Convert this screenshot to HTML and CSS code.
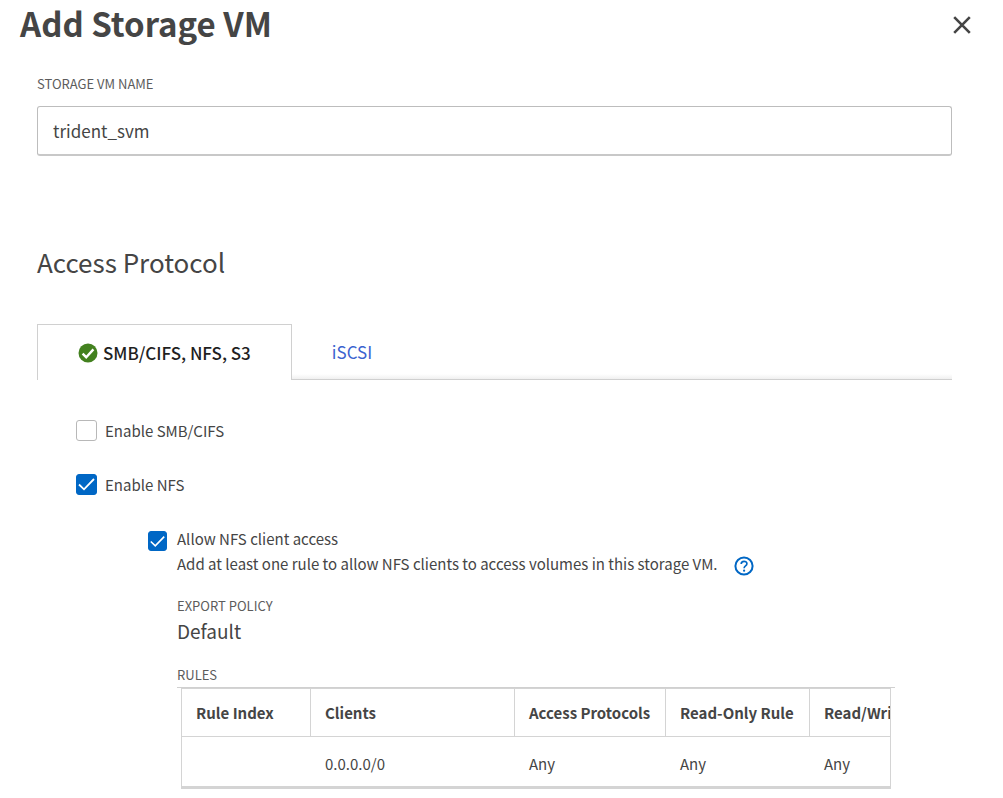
FILE: index.html
```html
<!DOCTYPE html>
<html lang="en">
<head>
    <meta charset="utf-8">
    <meta name="viewport" content="width=device-width, initial-scale=1">
    <title>Add Storage VM</title>
    <link rel="stylesheet" href="styles.css">
</head>
<body>
    <form class="dialog">
        <header class="dialog-header">
            <h1>Add Storage VM</h1>
            <button type="button" class="close" aria-label="Close">
                <svg width="20" height="20" viewBox="0 0 20 20"><path d="M2.2 2.2l15.6 15.6M17.8 2.2L2.2 17.8"/></svg>
            </button>
        </header>

        <div class="dialog-body">
            <label class="caption" for="svm_name">STORAGE VM NAME</label>
            <input type="text" class="text-input" id="svm_name" name="svm_name" value="trident_svm">

            <h2>Access Protocol</h2>

            <div class="tabs" role="tablist">
                <button type="button" class="tab active" role="tab" aria-selected="true">
                    <svg width="20" height="20" viewBox="0 0 20 20">
                        <circle cx="10" cy="10" r="9.5" fill="#43811f"/>
                        <path d="M4.6 10.6l3.6 3.6L15.4 6.4" fill="none" stroke="#fff" stroke-width="2.4"/>
                    </svg>
                    <span>SMB/CIFS, NFS, S3</span>
                </button>
                <button type="button" class="tab" role="tab" aria-selected="false">iSCSI</button>
            </div>

            <div class="panel">
                <div class="check-row">
                    <input type="checkbox" id="enable_smb">
                    <label for="enable_smb">Enable SMB/CIFS</label>
                </div>
                <div class="check-row">
                    <input type="checkbox" id="enable_nfs" checked>
                    <label for="enable_nfs">Enable NFS</label>
                </div>

                <div class="nfs">
                    <input type="checkbox" class="small" id="nfs_client" checked>
                    <div class="nfs-content">
                        <label for="nfs_client">Allow NFS client access</label>
                        <div class="hint">
                            <span>Add at least one rule to allow NFS clients to access volumes in this storage VM.</span>
                            <button type="button" class="help" aria-label="Help">
                                <svg width="20" height="20" viewBox="0 0 20 20" fill="none" stroke="#0067c5">
                                    <circle cx="10" cy="10" r="8.6" stroke-width="2"/>
                                    <path d="M7.2 8.1c0-3.7 5.7-3.6 5.7-.3 0 2.1-2.8 2.2-2.8 4.4" stroke-width="1.7"/>
                                    <circle cx="10.1" cy="14.7" r="1.1" fill="#0067c5" stroke="none"/>
                                </svg>
                            </button>
                        </div>

                        <div class="caption">EXPORT POLICY</div>
                        <div class="policy">Default</div>

                        <div class="caption">RULES</div>
                        <div class="rules">
                            <div class="rules-scroll">
                                <table>
                                    <colgroup>
                                        <col class="col-index">
                                        <col class="col-clients">
                                        <col class="col-access">
                                        <col class="col-rule">
                                        <col class="col-rule">
                                    </colgroup>
                                    <thead>
                                        <tr>
                                            <th>Rule Index</th>
                                            <th>Clients</th>
                                            <th>Access Protocols</th>
                                            <th>Read-Only Rule</th>
                                            <th>Read/Wri</th>
                                        </tr>
                                    </thead>
                                    <tbody>
                                        <tr>
                                            <td></td>
                                            <td>0.0.0.0/0</td>
                                            <td>Any</td>
                                            <td>Any</td>
                                            <td>Any</td>
                                        </tr>
                                    </tbody>
                                </table>
                            </div>
                        </div>
                    </div>
                </div>
            </div>
        </div>
    </form>
</body>
</html>
```

FILE: styles.css
```css
* {
  box-sizing: border-box;
}
body {
  margin: 0;
  background: #fff;
  color: #454545;
  font-family: "Noto Sans CJK SC", "Open Sans", sans-serif;
  font-size: 15px;
  line-height: 24px;
}
button, input {
  margin: 0;
  font: inherit;
  color: inherit;
}
button {
  padding: 0;
  border: 0;
  background: none;
  cursor: pointer;
}
svg {
  display: block;
}
h1, h2 {
  margin: 0;
}

.dialog-header {
  display: flex;
  justify-content: space-between;
  align-items: flex-start;
  height: 48px;
  padding: 0 31px 0 20px;
}
h1 {
  font-size: 33px;
  line-height: 46px;
  font-weight: 700;
}
.close {
  padding-top: 15px;
}
.close path {
  stroke: #454545;
  stroke-width: 2.6;
}

.dialog-body {
  padding: 28px 51px 10px 37px;
}
.caption {
  display: block;
  font-size: 13px;
  line-height: 16px;
  color: #5c5c5c;
}
.text-input {
  display: block;
  width: 100%;
  height: 50px;
  margin-top: 14px;
  padding: 0 15px;
  border: 1px solid #bdbdbd;
  border-bottom: 2px solid #c8c8c8;
  border-radius: 3px;
  font-size: 17px;
}
h2 {
  margin-top: 86px;
  font-size: 26px;
  line-height: 40px;
  font-weight: 400;
}

.tabs {
  display: flex;
  height: 56px;
  margin-top: 42px;
  border-bottom: 1px solid #d0d0d0;
  background: linear-gradient(#fff 50px, #f0f0f0 55px);
}
.tab {
  display: flex;
  align-items: center;
  gap: 5px;
  padding: 0 40px;
  font-size: 17px;
  color: #3b63cf;
}
.tab.active {
  height: 56px;
  border: 1px solid #d0d0d0;
  border-bottom: 0;
  background: #fff;
  color: #1f1f1f;
  font-weight: 500;
}

.panel {
  padding: 39px 0 0 39px;
}
.check-row {
  display: flex;
  align-items: flex-start;
  gap: 8px;
  margin-bottom: 30px;
}
input[type="checkbox"] {
  appearance: none;
  flex: none;
  width: 21px;
  height: 21px;
  margin-top: 1px;
  border: 1px solid #b8b8b8;
  border-radius: 3px;
  background: #fff;
}
input[type="checkbox"]:checked {
  border-color: #0067c5;
  background: #0067c5 url("data:image/svg+xml,%3Csvg xmlns='http://www.w3.org/2000/svg' viewBox='0 0 19 19'%3E%3Cpath d='M2 9.5l5 4.8L17 4' fill='none' stroke='%23fff' stroke-width='1.8'/%3E%3C/svg%3E") center / contain no-repeat;
}
input[type="checkbox"].small {
  width: 19px;
  height: 20px;
  margin-top: 4px;
}

.nfs {
  display: flex;
  gap: 10px;
  padding-left: 72px;
}
.nfs-content {
  flex: 1;
  min-width: 0;
  margin-right: 57px;
}
.hint {
  display: flex;
  align-items: center;
  gap: 16px;
  margin: 1px 0 22px;
}
.help {
  padding-top: 3px;
}
.policy {
  margin-bottom: 19px;
  font-size: 19px;
  line-height: 34px;
}
.rules {
  margin-top: 4px;
  padding: 0 4px;
  border-top: 1px solid #d0d0d0;
}
.rules-scroll {
  overflow: hidden;
  border: 1px solid #d4d4d4;
  border-bottom-width: 3px;
}

table {
  width: 772px;
  table-layout: fixed;
  border-collapse: separate;
  border-spacing: 0;
}
.col-index {
  width: 129px;
}
.col-clients {
  width: 204px;
}
.col-access {
  width: 151px;
}
.col-rule {
  width: 144px;
}
th, td {
  padding: 0 14px;
  text-align: left;
}
th {
  height: 48px;
  border-right: 1px solid #d4d4d4;
  border-bottom: 1px solid #d4d4d4;
  font-weight: 700;
}
td {
  height: 49px;
  padding-top: 4px;
}
```
